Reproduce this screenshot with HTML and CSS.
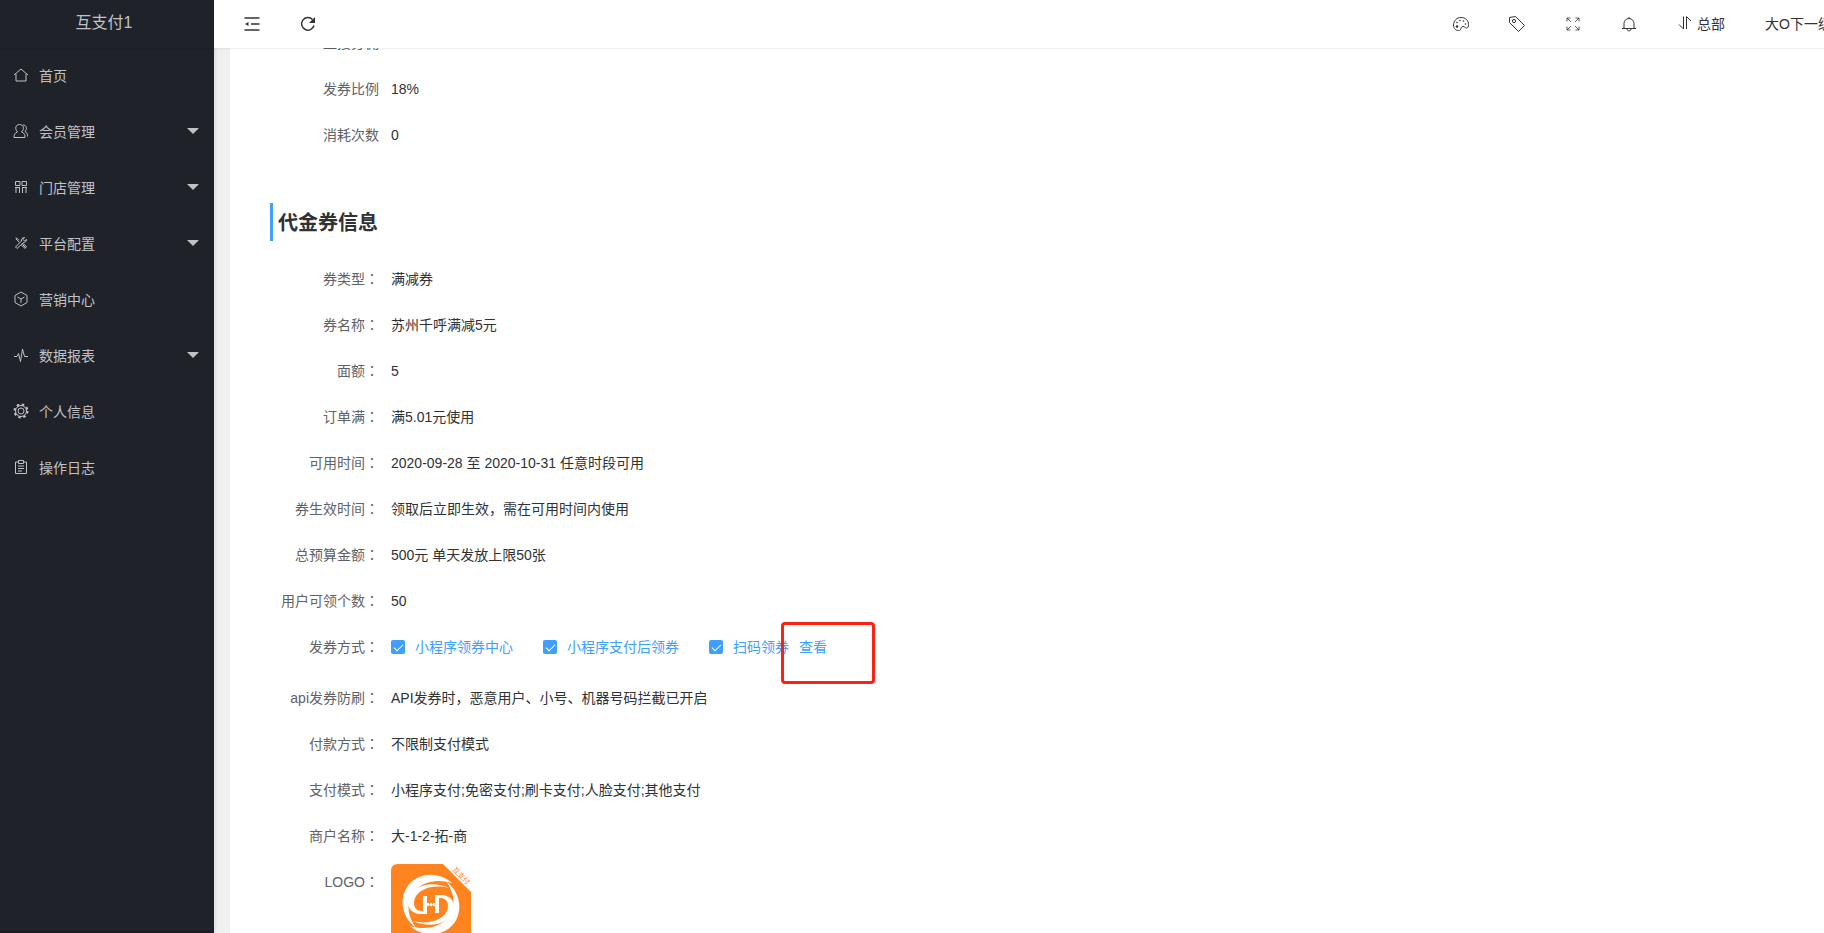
FILE: index.html
```
<!DOCTYPE html>
<html lang="zh-CN">
<head>
  <meta charset="UTF-8">
  <title>代金券信息</title>
  <meta name="viewport" content="width=device-width, initial-scale=1.0">
  <link rel="stylesheet" href="styles.css">
</head>
<body>
  <aside class="side">
    <div class="side-logo">互支付1</div>
    <nav class="side-menu">
      <a href="#"><svg class="icon" viewBox="0 0 16 16"><path d="M1 8 8 2l7 6M3 7v7h10V7"/></svg>首页</a>
      <a href="#"><svg class="icon" viewBox="0 0 16 16"><path d="M4.500 9C1.500 10 1 12 1 14.500h11c0-2.500-.5-4.500-3.500-5.500C12 6 10.500 1.500 6.500 1.500S1.500 6 4.500 9M10 2c3.500 0 4.500 4 2 6.500 2 1 2.500 2.500 2.500 5"/></svg>会员管理<i class="caret"></i></a>
      <a href="#"><svg class="icon" viewBox="0 0 16 16"><path d="M2.500 2.500h4.500v4H2.500zM9 2.500h4.500v4H9zM3 8.500V14M6.500 8.500V14M9.500 8.500V14M13 8.500V14M2 8.500h5M9 8.500h5"/></svg>门店管理<i class="caret"></i></a>
      <a href="#"><svg class="icon" viewBox="0 0 16 16"><path d="m3 4 3.500 3.500M9.500 9.500l3 3M10 8.500l3.500 3-1.500 2L8.500 10M4 13.500 2.500 12l6-6c-.5-2 1-3.500 3-3.500L10 4.500 11.500 6l2-1.500c0 2-1.500 3-3 3zM2.500 3l2 .5L6 5.500"/></svg>平台配置<i class="caret"></i></a>
      <a href="#"><svg class="icon" viewBox="0 0 16 16"><path d="m8 1 6 3.500v7L8 15l-6-3.500v-7zM4.500 6 8 8l3.500-2M8 8v4"/></svg>营销中心</a>
      <a href="#"><svg class="icon" viewBox="0 0 16 16"><path d="M1 9.500h3l1.500-3 2 8 2-12.500 2 7.500H15"/></svg>数据报表<i class="caret"></i></a>
      <a href="#"><svg class="icon" viewBox="0 0 16 16"><circle cx="8" cy="8" r="3"/><circle cx="8" cy="8" r="5.500"/><circle cx="8" cy="8" r="6.500" stroke-width="2" stroke-dasharray="2.500 2.600"/></svg>个人信息</a>
      <a href="#"><svg class="icon" viewBox="0 0 16 16"><path d="M5 3H2.500v11.500h11V3H11M5.500 1.500h5v3h-5zM5 7h6M5 9.500h6M5 12h4"/></svg>操作日志</a>
    </nav>
  </aside>

  <div class="page">
    <header class="topbar">
      <button type="button" class="tool" aria-label="收起菜单"><svg class="icon bold" viewBox="0 0 16 16"><path d="M.5 2h15M7 8h8.500M.5 14h15"/><path class="fill" d="M4.500 6v4L1 8z"/></svg></button>
      <button type="button" class="tool" aria-label="刷新"><svg class="icon bold" viewBox="0 0 16 16"><path d="M14 9.500A6.300 6.300 0 1 1 12.500 3.500"/><path class="fill" d="M15 1v6H9z"/></svg></button>
      <div class="topbar-right">
        <button type="button" class="tool" aria-label="主题"><svg class="icon" viewBox="0 0 16 16"><path d="M8 1.500C3.500 1.500.5 5 .5 9s2.500 5.500 5 5.500c3.500 0 1.500-4 4.500-4 2 0 2 1.500 3.500 1.500s2-1.500 2-3.500c0-4-3-7-7.500-7z"/><g class="fill"><circle cx="4" cy="10.500" r="1.300"/><circle cx="4" cy="6.500" r=".8"/><circle cx="7" cy="4.500" r=".8"/><circle cx="10.500" cy="5" r=".8"/><circle cx="12.500" cy="8" r=".8"/></g></svg></button>
        <button type="button" class="tool" aria-label="标签"><svg class="icon" viewBox="0 0 16 16"><path d="M.5 1.500 6.500.5l9 9-6 6-9-9z"/><circle cx="5" cy="5" r="1.600"/></svg></button>
        <button type="button" class="tool" aria-label="全屏"><svg class="icon thin" viewBox="0 0 16 16"><path d="M2 5.500V2h3.500M2 2l4 4M10.500 2H14v3.500M14 2l-4 4M2 10.500V14h3.500M2 14l4-4M10.500 14H14v-3.500M14 14l-4-4"/></svg></button>
        <button type="button" class="tool" aria-label="消息"><svg class="icon" viewBox="0 0 16 16"><path d="M8 1v1M3 12.500V7.500a5 5 0 0 1 10 0v5M1 12.500h14M6 13c0 2.500 4 2.500 4 0"/></svg></button>
        <button type="button" class="tool text"><svg class="icon" viewBox="0 0 16 16"><path d="M6.500 1.500V14L2 9.500M9.500 14V1.500L14 6"/></svg>总部</button>
        <button type="button" class="tool text">大O下一级</button>
      </div>
    </header>

    <main class="scroll">
      <section class="panel">
        <dl class="rows">
          <div class="row"><dt>直接分佣</dt><dd></dd></div>
          <div class="row"><dt>发券比例</dt><dd>18%</dd></div>
          <div class="row"><dt>消耗次数</dt><dd>0</dd></div>
        </dl>

        <h2 class="title">代金券信息</h2>

        <dl class="rows">
          <div class="row"><dt>券类型<span class="mark" lang="zh-TW">：</span></dt><dd>满减券</dd></div>
          <div class="row"><dt>券名称<span class="mark" lang="zh-TW">：</span></dt><dd>苏州千呼满减5元</dd></div>
          <div class="row"><dt>面额<span class="mark" lang="zh-TW">：</span></dt><dd>5</dd></div>
          <div class="row"><dt>订单满<span class="mark" lang="zh-TW">：</span></dt><dd>满5.01元使用</dd></div>
          <div class="row"><dt>可用时间<span class="mark" lang="zh-TW">：</span></dt><dd>2020-09-28 至 2020-10-31 任意时段可用</dd></div>
          <div class="row"><dt>券生效时间<span class="mark" lang="zh-TW">：</span></dt><dd>领取后立即生效，需在可用时间内使用</dd></div>
          <div class="row"><dt>总预算金额<span class="mark" lang="zh-TW">：</span></dt><dd>500元 单天发放上限50张</dd></div>
          <div class="row"><dt>用户可领个数<span class="mark" lang="zh-TW">：</span></dt><dd>50</dd></div>
          <div class="row checks">
            <dt>发券方式<span class="mark" lang="zh-TW">：</span></dt>
            <dd>
              <label class="check"><input type="checkbox" checked>小程序领券中心</label>
              <label class="check"><input type="checkbox" checked>小程序支付后领券</label>
              <label class="check"><input type="checkbox" checked>扫码领券</label>
              <span class="view"><a href="#">查看</a></span>
            </dd>
          </div>
          <div class="row"><dt>api发券防刷<span class="mark" lang="zh-TW">：</span></dt><dd>API发券时，恶意用户、小号、机器号码拦截已开启</dd></div>
          <div class="row"><dt>付款方式<span class="mark" lang="zh-TW">：</span></dt><dd>不限制支付模式</dd></div>
          <div class="row"><dt>支付模式<span class="mark" lang="zh-TW">：</span></dt><dd>小程序支付;免密支付;刷卡支付;人脸支付;其他支付</dd></div>
          <div class="row"><dt>商户名称<span class="mark" lang="zh-TW">：</span></dt><dd>大-1-2-拓-商</dd></div>
          <div class="row">
            <dt>LOGO<span class="mark" lang="zh-TW">：</span></dt>
            <dd>
              <svg class="brand" viewBox="0 0 80 80" role="img" aria-label="LOGO">
                <path fill="#ff8420" d="M7 0h45l28 28v52H0V7q0-7 7-7z"/>
                <g id="swirl" fill="#fff">
                  <path d="M61 19C48 7 26 8 16 23c-8 13-5 30 9 41-8-11-10-23-4-33 7-13 24-17 40-12z"/>
                  <path d="M58 24C42 17 25 20 19 32c-5 10 1 18 11 18h6V32h-4v15c-7 1-11-5-8-13 4-9 18-14 34-10z"/>
                  <path d="M35 39h3v3h-3z"/>
                </g>
                <use href="#swirl" transform="rotate(180 40 40.500)"/>
                <path fill="#fff" d="m40 38.500 2 2-2 2-2-2z"/>
                <text fill="#ff8420" font-size="7" transform="translate(61 6) rotate(45)">互支付</text>
              </svg>
            </dd>
          </div>
        </dl>
      </section>
    </main>
  </div>
</body>
</html>
```
FILE: styles.css
```
*,
*::before,
*::after {
  margin: 0;
  padding: 0;
  box-sizing: border-box;
}
body {
  display: flex;
  height: 100vh;
  overflow: hidden;
  font-family: "Liberation Sans", "Noto Sans CJK SC", sans-serif;
  font-size: 14px;
  color: #303133;
  background: #f0f0f0;
}
a {
  text-decoration: none;
}
.icon {
  width: 16px;
  height: 16px;
  flex: none;
  fill: none;
  stroke: currentColor;
  stroke-width: 1;
}
.icon.bold {
  stroke-width: 1.5;
}
.icon.thin {
  stroke-width: 0.8;
}
.icon .fill {
  fill: currentColor;
  stroke: none;
}

/* sidebar */
.side {
  flex: none;
  width: 214px;
  color: #c1c2c4;
  background: #20222a;
  border-bottom: 2px solid #1e1a28;
  box-shadow: 1px 0 4px rgba(0, 0, 0, 0.1);
  z-index: 1;
}
.side-logo {
  height: 48px;
  padding-right: 6px;
  line-height: 46px;
  font-size: 16px;
  text-align: center;
  box-shadow: 0 1px 2px rgba(0, 0, 0, 0.15);
}
.side-menu a {
  display: flex;
  align-items: center;
  height: 56px;
  padding: 0 15px 2px 13px;
  color: inherit;
}
.side-menu .icon {
  margin-right: 10px;
}
.caret {
  margin-left: auto;
  border: 6px solid transparent;
  border-top-color: currentColor;
  border-bottom: 0;
}

/* top bar */
.page {
  flex: 1;
  min-width: 0;
  display: flex;
  flex-direction: column;
}
.topbar {
  flex: none;
  display: flex;
  height: 48px;
  padding-left: 10px;
  overflow: hidden;
  background: #fff;
  box-shadow: 0 1px 2px rgba(0, 0, 0, 0.08);
  z-index: 1;
}
.topbar-right {
  display: flex;
  margin-left: auto;
  margin-right: -28px;
}
.tool {
  flex: none;
  display: flex;
  align-items: center;
  justify-content: center;
  width: 56px;
  border: 0;
  background: none;
  font: inherit;
  color: #333;
  white-space: nowrap;
  cursor: pointer;
}
.tool.text {
  width: auto;
  padding: 0 20px 2px;
}
.tool.text .icon {
  margin-right: 4px;
}

/* content */
.scroll {
  flex: 1;
  min-height: 0;
  overflow: hidden;
  padding-left: 15px;
}
.panel {
  margin-top: -25px;
  padding-left: 40px;
  background: #fff;
  border-left: 1px solid #ebeef5;
}
.row {
  display: flex;
  min-height: 40px;
  margin-bottom: 6px;
  line-height: 40px;
}
.row dt {
  flex: none;
  width: 121px;
  padding-right: 12px;
  text-align: right;
  color: #606266;
}
.row dd {
  color: #303133;
}
/* colon centred in its cell */
.mark {
  font-family: "Noto Sans CJK TC", sans-serif;
  line-height: 1;
}
.title {
  height: 38px;
  margin: 48px 0 18px;
  padding-left: 5px;
  border-left: 3px solid #409eff;
  font-size: 20px;
  line-height: 40px;
}
.checks {
  margin-bottom: 11px;
}
.checks dd {
  display: flex;
}
.check {
  display: flex;
  align-items: center;
  margin-right: 30px;
  color: #409eff;
}
.check:nth-of-type(3) {
  margin-right: 10px;
}
.check input {
  appearance: none;
  position: relative;
  width: 14px;
  height: 14px;
  margin-right: 10px;
  border-radius: 2px;
  background: #409eff;
}
.check input:checked::after {
  content: "";
  position: absolute;
  left: 5px;
  top: 2px;
  width: 5px;
  height: 9px;
  border: solid #fff;
  border-width: 0 1px 1px 0;
  transform: rotate(45deg);
}
.view {
  position: relative;
}
.view a {
  color: #409eff;
}
.view::after {
  content: "";
  position: absolute;
  left: -18px;
  top: -5px;
  width: 94px;
  height: 62px;
  border: 3px solid #ff2015;
  border-radius: 4px;
  pointer-events: none;
}
.brand {
  display: block;
  width: 80px;
  height: 80px;
  margin-top: 2px;
}
```
